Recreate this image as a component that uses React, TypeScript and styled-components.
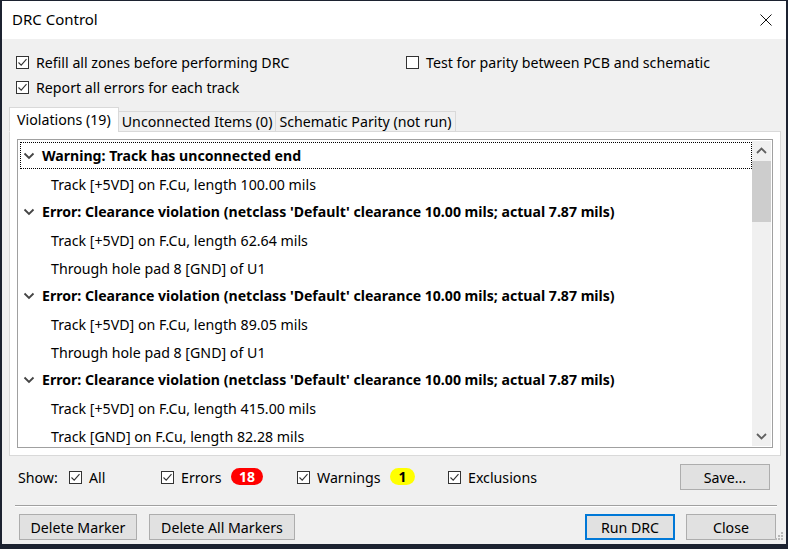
import styled, { createGlobalStyle } from "styled-components";

const GlobalStyle = createGlobalStyle`
  html, body {
    margin: 0;
    padding: 0;
    background: #1c2230;
  }
  body {
    font-family: "Noto Sans", "Open Sans", sans-serif;
    font-size: 14.2px;
    color: #000;
  }
`;

type Item = { title: string; children: string[] };

const items: Item[] = [
  {
    title: "Warning: Track has unconnected end",
    children: ["Track [+5VD] on F.Cu, length 100.00 mils"],
  },
  {
    title:
      "Error: Clearance violation (netclass 'Default' clearance 10.00 mils; actual 7.87 mils)",
    children: ["Track [+5VD] on F.Cu, length 62.64 mils", "Through hole pad 8 [GND] of U1"],
  },
  {
    title:
      "Error: Clearance violation (netclass 'Default' clearance 10.00 mils; actual 7.87 mils)",
    children: ["Track [+5VD] on F.Cu, length 89.05 mils", "Through hole pad 8 [GND] of U1"],
  },
  {
    title:
      "Error: Clearance violation (netclass 'Default' clearance 10.00 mils; actual 7.87 mils)",
    children: ["Track [+5VD] on F.Cu, length 415.00 mils", "Track [GND] on F.Cu, length 82.28 mils"],
  },
];

const CheckMark = () => (
  <svg width="11" height="11" viewBox="0 0 11 11">
    <path d="M1.5 5.5 L4.2 8.2 L9.5 2.2" fill="none" stroke="#333" strokeWidth="1.1" />
  </svg>
);

const Check = ({ checked, label }: { checked?: boolean; label: string }) => (
  <CheckLabel>
    <Box>{checked && <CheckMark />}</Box>
    {label}
  </CheckLabel>
);

const Chevron = () => (
  <svg width="12" height="8" viewBox="0 0 12 8">
    <path d="M1.5 1.5 L6 6 L10.5 1.5" fill="none" stroke="#444" strokeWidth="1.8" />
  </svg>
);

const Arrow = ({ up }: { up?: boolean }) => (
  <svg width="11" height="7" viewBox="0 0 11 7">
    <path
      d={up ? "M1 6 L5.5 1.5 L10 6" : "M1 1 L5.5 5.5 L10 1"}
      fill="none"
      stroke="#606060"
      strokeWidth="1.8"
    />
  </svg>
);

const App = () => {
  return (
    <>
      <GlobalStyle />
      <Window>
        <TitleBar>
          <Title>DRC Control</Title>
          <CloseX>
            <svg width="12" height="12" viewBox="0 0 12 12">
              <path d="M0.5 0.5 L11.5 11.5 M11.5 0.5 L0.5 11.5" stroke="#111" strokeWidth="1" />
            </svg>
          </CloseX>
        </TitleBar>
        <Body>
          <Options>
            <Check checked label="Refill all zones before performing DRC" />
            <Check label="Test for parity between PCB and schematic" />
            <Check checked label="Report all errors for each track" />
          </Options>

          <Tabs>
            <Tab active>Violations (19)</Tab>
            <Tab>Unconnected Items (0)</Tab>
            <Tab>Schematic Parity (not run)</Tab>
          </Tabs>
          <Panel>
            <List>
              <Rows>
                {items.map((item, i) => (
                  <Group key={i}>
                    <HeaderRow focused={i === 0}>
                      <Chevron />
                      <span>{item.title}</span>
                    </HeaderRow>
                    {item.children.map((c, j) => (
                      <ChildRow key={j}>{c}</ChildRow>
                    ))}
                  </Group>
                ))}
              </Rows>
              <ScrollBar>
                <ScrollBtn>
                  <Arrow up />
                </ScrollBtn>
                <Thumb />
                <Track />
                <ScrollBtn>
                  <Arrow />
                </ScrollBtn>
              </ScrollBar>
            </List>
          </Panel>

          <ShowRow>
            <ShowLabel>Show:</ShowLabel>
            <Filter width={92}>
              <Check checked label="All" />
            </Filter>
            <Filter width={136}>
              <Check checked label="Errors" />
              <Badge color="#ff0000" text="#fff" left={231} w={32}>
                18
              </Badge>
            </Filter>
            <Filter width={151}>
              <Check checked label="Warnings" />
              <Badge color="#ffff00" text="#000" left={390} w={25}>
                1
              </Badge>
            </Filter>
            <Filter width={120}>
              <Check checked label="Exclusions" />
            </Filter>
            <Spacer />
            <Button w={90}>Save...</Button>
          </ShowRow>

          <Separator />

          <ButtonRow>
            <Button w={118}>Delete Marker</Button>
            <Button w={146}>Delete All Markers</Button>
            <Spacer />
            <Button w={90} primary>
              Run DRC
            </Button>
            <Button w={90}>Close</Button>
          </ButtonRow>
          <Grip>
            <svg width="10" height="10" viewBox="0 0 10 10">
              <g fill="#b8b8b8">
                <rect x="7" y="0" width="2" height="2" />
                <rect x="4" y="3" width="2" height="2" />
                <rect x="7" y="3" width="2" height="2" />
                <rect x="1" y="6" width="2" height="2" />
                <rect x="4" y="6" width="2" height="2" />
                <rect x="7" y="6" width="2" height="2" />
              </g>
            </svg>
          </Grip>
        </Body>
      </Window>
    </>
  );
};
export default App;

const Window = styled.div`
  margin: 1px 0 0 2px;
  width: 784px;
  height: 543px;
  display: flex;
  flex-direction: column;
  background: #f0f0f0;
`;

const TitleBar = styled.div`
  height: 38px;
  flex-shrink: 0;
  background: #fff;
  display: flex;
  align-items: center;
  padding: 0 14px 0 10px;
`;

const Title = styled.div`
  flex: 1;
  font-size: 15px;
  padding-bottom: 2px;
`;

const CloseX = styled.div`
  display: flex;
  margin-bottom: 1px;
`;

const Body = styled.div`
  position: relative;
  flex: 1;
  display: flex;
  flex-direction: column;
  padding: 0 0 0 7px;
`;

const Options = styled.div`
  display: grid;
  grid-template-columns: 390px auto;
  row-gap: 3px;
  padding: 12px 0 0 7px;
  height: 68px;
  box-sizing: border-box;
  align-content: start;
`;

const CheckLabel = styled.label`
  display: flex;
  align-items: center;
  gap: 7px;
  height: 22px;
  white-space: nowrap;
`;

const Box = styled.span`
  width: 13px;
  height: 13px;
  box-sizing: border-box;
  border: 1px solid #333;
  background: #fff;
  display: flex;
  align-items: center;
  justify-content: center;
`;

const Tabs = styled.div`
  display: flex;
  align-items: flex-end;
  height: 24px;
  flex-shrink: 0;
  position: relative;
  z-index: 1;
`;

const Tab = styled.div<{ active?: boolean }>`
  height: ${(p) => (p.active ? 25 : 21)}px;
  box-sizing: border-box;
  padding: 0 ${(p) => (p.active ? 7 : 3)}px;
  display: flex;
  align-items: center;
  border: 1px solid #d9d9d9;
  border-bottom: ${(p) => (p.active ? "1px solid #fff" : "1px solid #d9d9d9")};
  margin-left: ${(p) => (p.active ? 0 : -1)}px;
  background: ${(p) => (p.active ? "#fff" : "#f0f0f0")};
  margin-bottom: -1px;
  white-space: nowrap;
`;

const Panel = styled.div`
  width: 772px;
  height: 325px;
  flex-shrink: 0;
  box-sizing: border-box;
  background: #fff;
  border: 1px solid #d9d9d9;
  padding: 7px;
`;

const List = styled.div`
  height: 309px;
  box-sizing: border-box;
  border: 1px solid #a0a0a0;
  display: flex;
  overflow: hidden;
`;

const Rows = styled.div`
  flex: 1;
  padding: 2px 0 0 2px;
  overflow: hidden;
`;

const Group = styled.div``;

const HeaderRow = styled.div<{ focused?: boolean }>`
  height: 27px;
  box-sizing: border-box;
  display: flex;
  align-items: center;
  gap: 7px;
  padding-left: 2px;
  font-weight: 700;
  font-size: 14.1px;
  white-space: nowrap;
  margin-bottom: 1px;
  border: 1px dotted ${(p) => (p.focused ? "#000" : "transparent")};
`;

const ChildRow = styled.div`
  height: 28px;
  display: flex;
  align-items: center;
  padding-left: 31px;
  white-space: nowrap;
`;

const ScrollBar = styled.div`
  width: 19px;
  margin: 1px 1px 1px 0;
  background: #f0f0f0;
  display: flex;
  flex-direction: column;
`;

const ScrollBtn = styled.div`
  height: 19px;
  display: flex;
  align-items: center;
  justify-content: center;
`;

const Thumb = styled.div`
  height: 61px;
  margin: 1px 0 0;
  background: #cdcdcd;
`;

const Track = styled.div`
  flex: 1;
`;

const ShowRow = styled.div`
  position: relative;
  height: 42px;
  flex-shrink: 0;
  display: flex;
  align-items: center;
  padding: 0 16px 0 9px;
`;

const ShowLabel = styled.span`
  width: 51px;
`;

const Filter = styled.div<{ width: number }>`
  width: ${(p) => p.width}px;
  display: flex;
  align-items: center;
`;

const Badge = styled.span<{ color: string; text: string; left: number; w: number }>`
  position: absolute;
  left: ${(p) => p.left - 9}px;
  top: 12px;
  width: ${(p) => p.w}px;
  height: 17px;
  border-radius: 9px;
  background: ${(p) => p.color};
  color: ${(p) => p.text};
  font-weight: 700;
  font-size: 14px;
  line-height: 17px;
  text-align: center;
`;

const Spacer = styled.div`
  flex: 1;
`;

const Button = styled.button<{ w: number; primary?: boolean }>`
  width: ${(p) => p.w}px;
  height: 26px;
  box-sizing: border-box;
  font-family: inherit;
  font-size: 14.2px;
  color: #000;
  background: #e1e1e1;
  border: ${(p) => (p.primary ? "2px solid #0078d7" : "1px solid #adadad")};
  padding: 0;
`;

const Separator = styled.div`
  height: 1px;
  flex-shrink: 0;
  margin: 7px 9px 0 6px;
  background: #a0a0a0;
  border-bottom: 1px solid #fff;
`;

const ButtonRow = styled.div`
  display: flex;
  align-items: center;
  gap: 12px;
  padding: 7px 10px 0 10px;
  & > button:last-child {
    margin-left: -1px;
  }
`;

const Grip = styled.div`
  position: absolute;
  right: 2px;
  bottom: 2px;
  display: flex;
`;
